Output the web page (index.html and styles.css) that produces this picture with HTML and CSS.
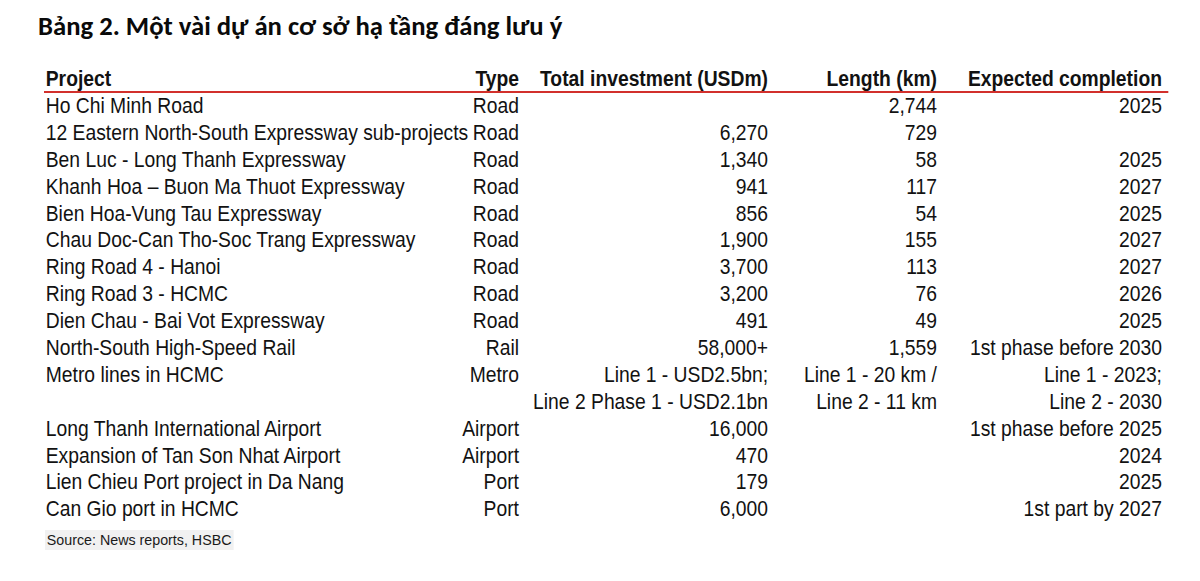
FILE: index.html
```html
<!DOCTYPE html>
<html lang="vi">
<head>
<meta charset="utf-8">
<link rel="stylesheet" href="styles.css">
</head>
<body>
<div class="page">
  <h1 class="title">Bảng 2. Một vài dự án cơ sở hạ tầng đáng lưu ý</h1>
  <div class="table">
    <div class="row head">
      <div class="c proj">Project</div>
      <div class="c num">Type</div>
      <div class="c num">Total investment (USDm)</div>
      <div class="c num">Length (km)</div>
      <div class="c num">Expected completion</div>
    </div>
    <div class="row"><div class="c proj">Ho Chi Minh Road</div><div class="c num">Road</div><div class="c num"></div><div class="c num">2,744</div><div class="c num">2025</div></div>
    <div class="row"><div class="c proj">12 Eastern North-South Expressway sub-projects</div><div class="c num">Road</div><div class="c num">6,270</div><div class="c num">729</div><div class="c num"></div></div>
    <div class="row"><div class="c proj">Ben Luc - Long Thanh Expressway</div><div class="c num">Road</div><div class="c num">1,340</div><div class="c num">58</div><div class="c num">2025</div></div>
    <div class="row"><div class="c proj">Khanh Hoa – Buon Ma Thuot Expressway</div><div class="c num">Road</div><div class="c num">941</div><div class="c num">117</div><div class="c num">2027</div></div>
    <div class="row"><div class="c proj">Bien Hoa-Vung Tau Expressway</div><div class="c num">Road</div><div class="c num">856</div><div class="c num">54</div><div class="c num">2025</div></div>
    <div class="row"><div class="c proj">Chau Doc-Can Tho-Soc Trang Expressway</div><div class="c num">Road</div><div class="c num">1,900</div><div class="c num">155</div><div class="c num">2027</div></div>
    <div class="row"><div class="c proj">Ring Road 4 - Hanoi</div><div class="c num">Road</div><div class="c num">3,700</div><div class="c num">113</div><div class="c num">2027</div></div>
    <div class="row"><div class="c proj">Ring Road 3 - HCMC</div><div class="c num">Road</div><div class="c num">3,200</div><div class="c num">76</div><div class="c num">2026</div></div>
    <div class="row"><div class="c proj">Dien Chau - Bai Vot Expressway</div><div class="c num">Road</div><div class="c num">491</div><div class="c num">49</div><div class="c num">2025</div></div>
    <div class="row"><div class="c proj">North-South High-Speed Rail</div><div class="c num">Rail</div><div class="c num">58,000+</div><div class="c num">1,559</div><div class="c num">1st phase before 2030</div></div>
    <div class="row"><div class="c proj">Metro lines in HCMC</div><div class="c num">Metro</div><div class="c num">Line 1 - USD2.5bn;</div><div class="c num">Line 1 - 20 km /</div><div class="c num">Line 1 - 2023;</div></div>
    <div class="row"><div class="c proj"></div><div class="c num"></div><div class="c num">Line 2 Phase 1 - USD2.1bn</div><div class="c num">Line 2 - 11 km</div><div class="c num">Line 2 - 2030</div></div>
    <div class="row"><div class="c proj">Long Thanh International Airport</div><div class="c num">Airport</div><div class="c num">16,000</div><div class="c num"></div><div class="c num">1st phase before 2025</div></div>
    <div class="row"><div class="c proj">Expansion of Tan Son Nhat Airport</div><div class="c num">Airport</div><div class="c num">470</div><div class="c num"></div><div class="c num">2024</div></div>
    <div class="row"><div class="c proj">Lien Chieu Port project in Da Nang</div><div class="c num">Port</div><div class="c num">179</div><div class="c num"></div><div class="c num">2025</div></div>
    <div class="row"><div class="c proj">Can Gio port in HCMC</div><div class="c num">Port</div><div class="c num">6,000</div><div class="c num"></div><div class="c num">1st part by 2027</div></div>
  </div>
  <div class="source">Source: News reports, HSBC</div>
</div>
</body>
</html>
```

FILE: styles.css
```css
html, body {
  margin: 0;
  padding: 0;
  background: #ffffff;
}
.page {
  width: 1200px;
  height: 581px;
  overflow: hidden;
  padding: 10px 0 0 38px;
  box-sizing: border-box;
  color: #111111;
}
.title {
  margin: 0;
  font-family: "Carlito", "Open Sans", "Liberation Sans", sans-serif;
  font-weight: 700;
  font-size: 26.7px;
  line-height: 32px;
  color: #0a0a0a;
}
/* Arial Narrow look: Liberation Sans compressed horizontally */
.table {
  margin: 25px 0 0 6px;
  width: calc(1124px / 0.877);
  transform: scaleX(0.877);
  transform-origin: left top;
  font-family: "Liberation Sans", Arial, sans-serif;
  font-size: 22px;
  color: #121212;
}
.row {
  display: grid;
  grid-template-columns: calc(402px / 0.877) calc(73px / 0.877) calc(249px / 0.877) calc(169px / 0.877) calc(225px / 0.877);
  height: 26.9px;
  line-height: 26.9px;
  white-space: nowrap;
}
.row.head {
  height: 24px;
  line-height: 24px;
  font-weight: 700;
  border-bottom: 2px solid #d2302c;
}
.proj {
  text-align: left;
  padding-left: 2px;
}
.num {
  text-align: right;
}
.source {
  display: inline-block;
  margin: 7px 0 0 7px;
  padding: 1px 2px;
  white-space: nowrap;
  transform: scaleX(0.92);
  transform-origin: left top;
  background: #f1f1f1;
  font-family: "Liberation Sans", Arial, sans-serif;
  font-size: 15.5px;
  line-height: 18px;
  color: #1a1a1a;
}
```
